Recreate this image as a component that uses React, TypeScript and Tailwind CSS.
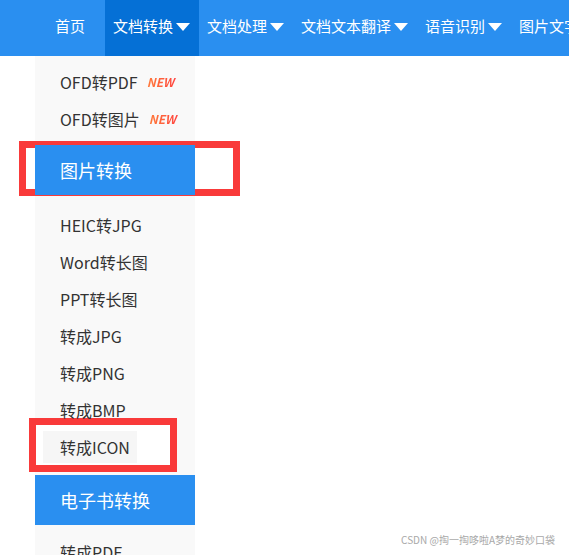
import React from "react";

const navTabs = ["文档转换", "文档处理", "文档文本翻译", "语音识别"];

const topItems = ["OFD转PDF", "OFD转图片"];
const imageItems = [
  "HEIC转JPG",
  "Word转长图",
  "PPT转长图",
  "转成JPG",
  "转成PNG",
  "转成BMP",
];

function Caret() {
  return (
    <svg width="16" height="10" viewBox="0 0 16 10" className="ml-[2px] shrink-0">
      <polygon points="1,1 15,1 8,9" fill="#ffffff" />
    </svg>
  );
}

function NewBadge() {
  return (
    <span className="ml-[9px] bg-gradient-to-r from-[#ff7a3a] to-[#ff3f3f] bg-clip-text pr-[3px] text-[12px] font-bold italic leading-none text-transparent">
      NEW
    </span>
  );
}

function MenuItem({ label, badge }: { label: string; badge?: boolean }) {
  return (
    <div className="relative z-10 flex h-[37px] items-center whitespace-nowrap pl-[25px] text-[16px] text-[#333333]">
      {label}
      {badge && <NewBadge />}
    </div>
  );
}

function Heading({ label, className }: { label: string; className?: string }) {
  return (
    <div
      className={
        "relative z-10 flex h-[50px] items-center bg-[#2a8ff0] pl-[25px] text-[18px] text-white " +
        (className ?? "")
      }
    >
      {label}
    </div>
  );
}

export default function App() {
  return (
    <div
      className="relative h-[555px] w-[569px] overflow-hidden bg-white"
      style={{ fontFamily: '"Noto Sans CJK SC", "Noto Sans", sans-serif' }}
    >
      <header className="flex h-[56px] items-stretch overflow-hidden bg-[#2a8ff0] text-[15px] text-white">
        <div className="ml-[55px] mr-[20px] flex shrink-0 items-center whitespace-nowrap pb-[3px]">
          首页
        </div>
        {navTabs.map((t, i) => (
          <div
            key={t}
            className={
              i === 0
                ? "flex shrink-0 items-center bg-[#0570d6] px-[8px] pb-[3px]"
                : "flex shrink-0 items-center px-[8px] pb-[3px]"
            }
          >
            <span className="whitespace-nowrap">{t}</span>
            <Caret />
          </div>
        ))}
        <div className="flex shrink-0 items-center whitespace-nowrap pl-[8px] pb-[3px]">
          图片文字识别
        </div>
      </header>

      <div className="relative ml-[35px] w-[160px] bg-[#f9f9f9] pt-[7px]">
        {/* annotation boxes */}
        <div className="absolute left-[-16px] top-[85px] h-[55px] w-[221px] border-[7px] border-[#f93a3a] bg-white" />
        <div className="absolute left-[-6px] top-[362px] h-[54px] w-[148px] border-[7px] border-[#f93a3a] bg-white" />

        {topItems.map((t) => (
          <MenuItem key={t} label={t} badge />
        ))}
        <Heading label="图片转换" className="mt-[8px]" />
        <div className="pt-[11px]">
          {imageItems.map((t) => (
            <MenuItem key={t} label={t} />
          ))}
          <div className="relative z-10 flex h-[37px] items-center">
            <span className="ml-[8px] flex h-[32px] w-[94px] items-center whitespace-nowrap bg-[#f6f6f6] pl-[17px] text-[16px] text-[#333333]">
              转成ICON
            </span>
          </div>
        </div>
        <Heading label="电子书转换" className="mt-[10px]" />
        <div className="pt-[8px]">
          <MenuItem label="转成PDF" />
        </div>
      </div>

      <div className="absolute bottom-[8px] right-[14px] text-[10px] text-[#a8a8a8]">
        CSDN @掏一掏哆啦A梦的奇妙口袋
      </div>
    </div>
  );
}
